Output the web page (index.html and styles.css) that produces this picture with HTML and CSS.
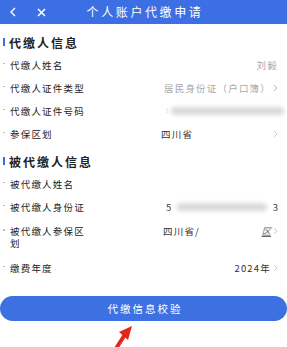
FILE: index.html
```html
<!DOCTYPE html>
<html lang="zh-CN">
<head>
<meta charset="utf-8">
<title>个人账户代缴申请</title>
<link rel="stylesheet" href="styles.css">
</head>
<body>
<header class="topbar">
  <div class="topbar-left">
    <svg class="ic-back" width="8" height="10" viewBox="0 0 8 10"><polyline points="6,1 2,5 6,9" fill="none" stroke="#fff" stroke-width="1.4"/></svg>
    <svg class="ic-close" width="9" height="9" viewBox="0 0 9 9"><path d="M1 1 L8 8 M8 1 L1 8" stroke="#fff" stroke-width="1.5"/></svg>
  </div>
  <div class="topbar-title">个人账户代缴申请</div>
  <div></div>
</header>

<section class="group">
  <h2 class="group-title"><span class="bar"></span>代缴人信息</h2>
  <div class="row">
    <span class="dot"></span><span class="label">代缴人姓名</span>
    <span class="value right gray">刘毅</span><span class="chev-space"></span>
  </div>
  <div class="row">
    <span class="dot"></span><span class="label">代缴人证件类型</span>
    <span class="value right gray">居民身份证（户口簿）</span>
    <svg class="chev" width="5" height="8" viewBox="0 0 5 8"><polyline points="1,1 4,4 1,7" fill="none" stroke="#bbb" stroke-width="1"/></svg>
  </div>
  <div class="row">
    <span class="dot"></span><span class="label">代缴人证件号码</span>
    <span class="value masked"><span class="mask-lead">!</span><span class="blur wide"></span></span>
  </div>
  <div class="row">
    <span class="dot"></span><span class="label">参保区划</span>
    <span class="value dark">四川省</span>
    <svg class="chev" width="5" height="8" viewBox="0 0 5 8"><polyline points="1,1 4,4 1,7" fill="none" stroke="#ccc" stroke-width="1"/></svg>
  </div>
</section>

<section class="group group2">
  <h2 class="group-title"><span class="bar"></span>被代缴人信息</h2>
  <div class="row">
    <span class="dot"></span><span class="label">被代缴人姓名</span>
  </div>
  <div class="row">
    <span class="dot"></span><span class="label">被代缴人身份证</span>
    <span class="value masked id"><span class="digit">5</span><span class="blur"></span><span class="digit">3</span></span>
  </div>
  <div class="row tall">
    <span class="dot"></span><span class="label wrap">被代缴人参保区划</span>
    <span class="value dark region"><span>四川省/</span><span class="qu">区</span></span>
    <svg class="chev" width="5" height="8" viewBox="0 0 5 8"><polyline points="1,1 4,4 1,7" fill="none" stroke="#ccc" stroke-width="1"/></svg>
  </div>
  <div class="row">
    <span class="dot"></span><span class="label">缴费年度</span>
    <span class="value right dark">2024年</span>
    <svg class="chev" width="5" height="8" viewBox="0 0 5 8"><polyline points="1,1 4,4 1,7" fill="none" stroke="#ccc" stroke-width="1"/></svg>
  </div>
</section>

<div class="actions">
  <button class="submit">代缴信息校验</button>
  <div class="arrow-wrap">
    <svg width="22" height="22" viewBox="0 0 22 22">
      <path d="M3 22 L10 11" stroke="#e5251c" stroke-width="4" stroke-linecap="round"/>
      <polygon points="5,7 18,1 14,15" fill="#e5251c"/>
    </svg>
  </div>
</div>
</body>
</html>
```

FILE: styles.css
```css
html, body {
  margin: 0;
  padding: 0;
  background: #ffffff;
}
body {
  width: 287px;
  height: 347px;
  overflow: hidden;
  font-family: "Noto Sans CJK SC", "Noto Sans", "Liberation Sans", sans-serif;
  color: #333;
}
.topbar {
  height: 24px;
  background: #3b6fe3;
  display: grid;
  grid-template-columns: 1fr auto 1fr;
  align-items: center;
}
.topbar-left {
  display: flex;
  align-items: center;
  padding-left: 9px;
  gap: 20px;
}
.topbar-title {
  color: #fff;
  font-size: 12px;
  letter-spacing: 2.6px;
  padding-left: 3px;
  line-height: 24px;
}
.group-title {
  margin: 7px 0 0 0;
  height: 22px;
  display: flex;
  align-items: center;
  font-size: 12px;
  font-weight: 700;
  letter-spacing: 2px;
  color: #222;
}
.group2 .group-title {
  margin-top: 5px;
}
.bar {
  width: 2px;
  height: 8px;
  background: #3a6fe0;
  margin: 0 4px 0 3px;
}
.row {
  height: 23px;
  display: flex;
  align-items: center;
  padding: 0 9px 0 3px;
  font-size: 9.5px;
  letter-spacing: 1.2px;
}
.row.tall {
  height: 38px;
  align-items: flex-start;
  padding-top: 7px;
  box-sizing: border-box;
  line-height: 12px;
}
.dot {
  width: 2px;
  height: 1.5px;
  background: #bbb;
  margin-right: 5px;
  flex: none;
  align-self: center;
  transform: translateY(-1px);
}
.row.tall .dot {
  align-self: flex-start;
  margin-top: 5px;
}
.label {
  width: 151px;
  flex: none;
  color: #222;
  white-space: nowrap;
}
.label.wrap {
  width: 82px;
  margin-right: 69px;
  white-space: normal;
}
.value {
  flex: 1;
  white-space: nowrap;
  display: flex;
  align-items: center;
}
.value.right {
  justify-content: flex-end;
}
.gray {
  color: #a8a8a8;
}
.dark {
  color: #333;
}
.chev {
  flex: none;
  margin-left: 2px;
}
.row.tall .chev {
  margin-top: 2px;
}
.chev-space {
  width: 0;
}
.masked {
  position: relative;
  padding-left: 5px;
}
.mask-lead {
  color: #bbb;
  font-size: 6px;
  margin-right: 2px;
}
.blur {
  height: 8px;
  background: #d9d9d9;
  border-radius: 4px;
  filter: blur(2px);
  flex: 1;
}
.blur.wide {
  margin-right: -6px;
}
.id .digit {
  color: #444;
  letter-spacing: 0;
}
.id .blur {
  margin: 0 6px 0 6px;
}
.region {
  padding-left: 2px;
  justify-content: space-between;
}
.qu {
  color: #666;
  text-decoration: underline;
  font-style: italic;
  letter-spacing: 0;
}
.actions {
  margin-top: 17px;
}
.submit {
  display: block;
  width: 287px;
  height: 25px;
  border: 0;
  border-radius: 13px;
  background: #3d71e2;
  color: #fff;
  font-family: inherit;
  font-size: 10.5px;
  letter-spacing: 2px;
  padding: 0 0 0 3px;
}
.arrow-wrap {
  padding: 4px 0 0 114px;
  line-height: 0;
}
```
